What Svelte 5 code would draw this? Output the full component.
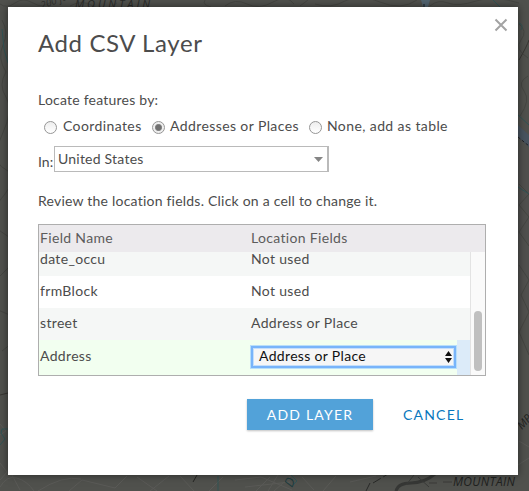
<script>
  const modes = [
    { label: 'Coordinates', checked: false },
    { label: 'Addresses or Places', checked: true },
    { label: 'None, add as table', checked: false }
  ];
  const rows = [
    { name: 'date_occu', use: 'Not used' },
    { name: 'frmBlock', use: 'Not used' },
    { name: 'street', use: 'Address or Place' }
  ];
</script>

<div class="screen">
  <svg class="map" width="529" height="491" viewBox="0 0 529 491" fill="none">
    <rect width="529" height="491" fill="#50514d" />
    <rect x="518" y="150" width="11" height="170" fill="#50504e" />
    <g stroke="#454642" stroke-width="1">
      <path d="M0 4q7 5 15-1t18 0 18-1M70 6q12-7 23 0t24-3M205 0q-3 5 6 7M225 6q10-8 22-2t26-2 21 2M300 6l8-6M315 4q16 5 30-3t35 1 37-2M430 6q8-7 18-3t28-2 43 2" />
      <path d="M2 20q7 12 1 25T6 72q-8 13 0 25T2 135t3 34-4 30 5 36-5 40 4 38-3 38" />
      <path d="M519 24q9 7 2 16t7 18M528 76q-11 6-4 15t-4 25M519 184l10 10-10 11 10 12-10 15 10 14M519 265l10 15-8 15 8 17-10 20 10 23" />
    </g>
    <g stroke="#5a5a57" stroke-width="1">
      <path d="M0 487q7-12 17-9t17 13M12 475l8 15M38 491q25-16 43-12M69 491l13-11 33 8 12-12M137 477l20 14M150 491l19-15M180 476l14 15M209 491l14-14M235 480l26-3 31 13M270 477l-14 14M278 475l-10 16M292 475l-18 16M245 487l45-5M302 477l12 13M323 491l13-15M350 482l26-6" />
      <path d="M520 422l9-8M519 441l10 6M518 465l11-7M0 435l6-4-6-7M0 463l7 9-7 8" />
    </g>
    <path d="M421 0l2 7h5l2-7z" fill="#526470" />
    <path d="M424 4v3" stroke="#171c22" />
    <path d="M518 125l11 10v12l-11-10z" fill="#48545f" />
    <path d="M518 115l11 10M493 0l7 7M518 187l11 7M519 23q5 2 2 7M2 29l2 20 4 14M8 429H2l-1 4 4 6-5 6M218 476v15M291 475l6 6-4 4" stroke="#315455" />
    <path d="M0 395l8-2M519 60q8-14 10-20" stroke="#373632" />
    <path d="M518 137l11 9" stroke="#202225" stroke-dasharray="3 2" />
    <path d="M197 475l-4 7" stroke="#242522" />
    <path d="M366 491l4-8M373 483l15-9" stroke="#292a28" stroke-dasharray="9 3" />
    <path d="M396 491q2-8 15-8t24-9" stroke="#363735" stroke-width="3" />
    <path d="M406 485l8-10M418 477l11 10M429 483h8M443 482h9" stroke="#3a3b39" />
    <text x="75" y="7.500" class="place top" textLength="75">MOUNTAIN</text>
    <text x="42" y="9" class="feet" transform="rotate(-20 42 9)">200 ft</text>
    <text x="453" y="486" class="place" textLength="62">MOUNTAIN</text>
    <text x="522" y="430" class="feet dark" transform="rotate(-48 522 430)">MP</text>
    <text x="292" y="488" class="feet teal" transform="rotate(-65 292 488)">D</text>
  </svg>

  <section class="dialog">
    <svg class="close" width="14" height="14" viewBox="0 0 14 14"><path d="M1.500 1.500l11 11M12.500 1.500l-11 11" stroke="#a3a3a3" stroke-width="2" /></svg>
    <h1>Add CSV Layer</h1>
    <p class="locate">Locate features by:</p>
    <div class="modes">
      {#each modes as mode, i}
        <label class="mode m{i}"><span class="radio" class:checked={mode.checked}></span><span class="caption">{mode.label}</span></label>
      {/each}
    </div>
    <div class="country">
      <span class="in">In:</span>
      <div class="combo"><span>United States</span><svg width="9" height="5" viewBox="0 0 9 5"><path d="M0 0h9L4.500 5z" fill="#858585" /></svg></div>
    </div>
    <p class="review">Review the location fields. Click on a cell to change it.</p>
    <div class="grid">
      <div class="head"><span>Field Name</span><span>Location Fields</span></div>
      <div class="body">
        <div class="rows">
          {#each rows as row, i}
            <div class="row r{i}"><span class="name">{row.name}</span><span>{row.use}</span></div>
          {/each}
          <div class="row active">
            <span class="name">Address</span>
            <div class="edit"><span>Address or Place</span><svg width="7" height="12" viewBox="0 0 7 12"><path d="M3.500 0L7 5H0zM0 7h7l-3.500 5z" fill="#111" /></svg></div>
            <span class="tail"></span>
          </div>
        </div>
        <div class="track"><div class="thumb"></div></div>
      </div>
    </div>
    <div class="actions">
      <button class="add">ADD LAYER</button>
      <button class="cancel">CANCEL</button>
    </div>
  </section>
</div>

<style>
  :global(body) { margin: 0; }
  .screen { position: relative; width: 529px; height: 491px; overflow: hidden; box-sizing: border-box; padding: 7px 0 0 8px; font-family: Lato, "Liberation Sans", sans-serif; font-size: 14px; color: #4c4c4c; }
  .screen * { box-sizing: border-box; }
  .map { position: absolute; left: 0; top: 0; }
  .place { font: italic 12px "Open Sans", sans-serif; fill: #20211f; }
  .top { font-size: 11px; fill: #2a2b29; }
  .feet { font: italic 10px "Open Sans", sans-serif; fill: #30322f; }
  .dark { font-size: 11px; fill: #222321; }
  .teal { font-size: 13px; fill: #1e3c3e; }
  .dialog { position: relative; width: 510px; height: 468px; background: #fff; padding: 20px 30px 0; box-shadow: 0 0 8px rgba(0, 0, 0, .5); display: flex; flex-direction: column; }
  .close { position: absolute; left: 486px; top: 11px; }
  h1 { margin: 0; height: 32px; line-height: 31px; font-size: 24px; font-weight: 400; letter-spacing: .6px; white-space: nowrap; }
  p { margin: 0; height: 20px; line-height: 20px; white-space: nowrap; letter-spacing: .22px; }
  .locate { margin-top: 31px; line-height: 19px; }
  .modes { display: flex; height: 20px; margin-top: 7px; padding-left: 6px; white-space: nowrap; }
  .mode { display: flex; align-items: flex-start; letter-spacing: .4px; }
  .caption { line-height: 17px; }
  .m0 { width: 108px; }
  .m1 { width: 157px; }
  .radio { width: 13px; height: 13px; margin: 4px 6px 0 0; border: 1px solid #969696; border-radius: 50%; background: linear-gradient(#eee, #fff); flex: none; }
  .m1 .radio, .m2 .radio { margin-right: 5px; }
  .radio.checked { background: radial-gradient(circle, #707070 0 2.500px, #909090 3.300px, #eee 3.900px); }
  .country { display: flex; height: 26px; margin-top: 9px; }
  .in { width: 16px; line-height: 32px; letter-spacing: 0; }
  .combo { display: flex; align-items: center; justify-content: space-between; width: 275px; height: 26px; border: 1px solid #bababa; border-right-width: 2px; padding: 0 4px 0 3px; letter-spacing: .22px; }
  .combo span { padding-bottom: 1px; }
  .review { margin-top: 19px; }
  .grid { width: 448px; height: 152px; margin-top: 13px; border: 1px solid #aeaeae; overflow: hidden; letter-spacing: .33px; }
  .head { display: flex; height: 27px; line-height: 25px; padding-left: 1px; background: #eceaed; color: #5c5c5c; }
  .head span:first-child { width: 211px; }
  .body { display: flex; height: 123px; }
  .rows { width: 431px; display: flex; flex-direction: column; }
  .row { display: flex; height: 32px; line-height: 29px; padding-left: 1px; white-space: nowrap; }
  .name { width: 211px; flex: none; }
  .row.r0 { height: 24px; line-height: 13px; background: #f5f7f6; }
  .r2 { background: #f5f7f6; }
  .row.active { height: 35px; line-height: 31px; background: #f2fff0; }
  .edit { display: flex; align-items: center; justify-content: space-between; width: 205px; height: 22px; margin-top: 6px; padding: 0 2px 0 6px; border: 2px solid #78b4fa; background: #f6f6f6; box-shadow: 0 0 0 1px #b8dffa, inset 0 0 0 1px #c4dffb; color: #111; line-height: 16px; }
  .edit span { padding-bottom: 2px; }
  .tail { flex: 1; margin-left: 1px; background: #dcebf9; }
  .track { flex: 1; border-left: 1px solid #e3e3e3; background: #fafafa; padding: 59px 0 0 3px; }
  .thumb { width: 8px; height: 60px; border-radius: 4px; background: #c0c0c0; }
  .actions { display: flex; margin-top: 23px; padding-left: 209px; }
  button { font: 14px/30px Lato, sans-serif; border: 0; padding: 0; height: 31px; letter-spacing: 1.2px; }
  .add { width: 126px; background: #52a2d9; color: #fff; box-shadow: 0 1px 2px rgba(0, 0, 0, .25); }
  .cancel { margin-left: 30px; background: transparent; color: #0877bd; }
</style>
